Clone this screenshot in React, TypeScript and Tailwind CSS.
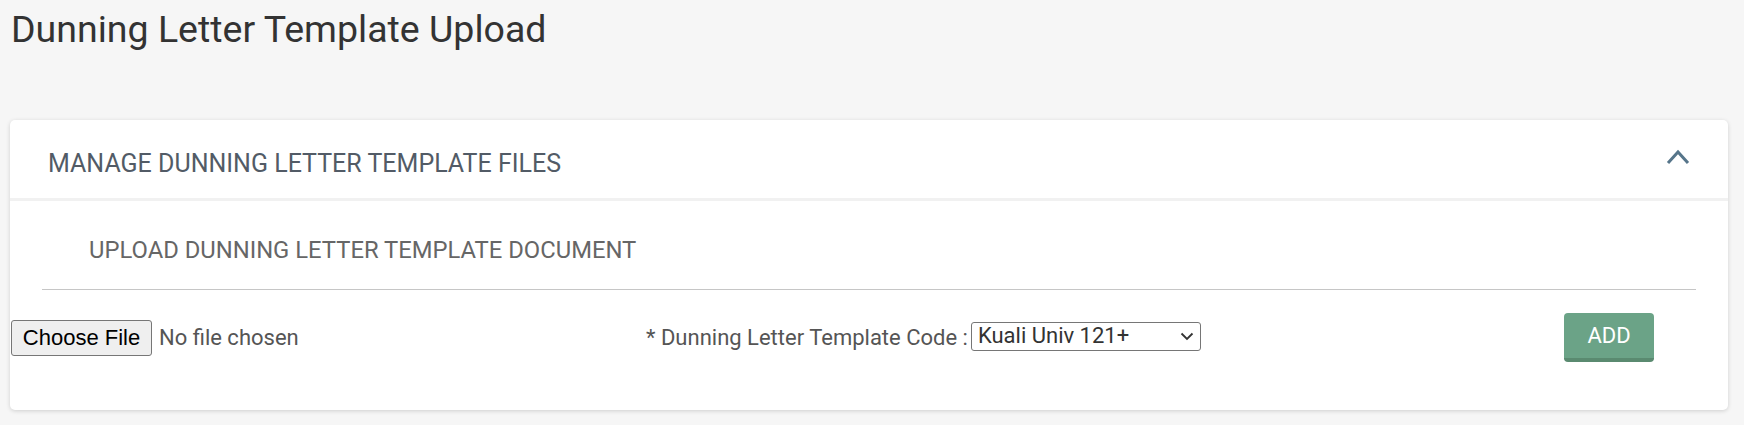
import { useState } from 'react';

const ChevronUp = () => (
  <svg width="24" height="16" viewBox="0 0 24 16" fill="none">
    <path d="M2 14 L12 3 L22 14" stroke="#56758a" strokeWidth="3" />
  </svg>
);

const SelectChevron = () => (
  <svg width="14" height="9" viewBox="0 0 14 9" fill="none">
    <path d="M1.5 1.5 L7 7 L12.5 1.5" stroke="#333" strokeWidth="1.8" />
  </svg>
);

const App = () => {
  const [open, setOpen] = useState(true);
  const [code] = useState('Kuali Univ 121+');

  return (
    <div className="min-h-screen bg-[#f6f6f6] font-['Roboto',sans-serif] pt-[7px]">
      <h1 className="ml-[11px] text-[37.5px] leading-[44px] text-[#333]">
        Dunning Letter Template Upload
      </h1>

      <div className="mt-[69px] ml-[10px] w-[1718px] bg-white rounded-[5px] shadow-[0_1px_4px_rgba(0,0,0,0.16)]">
        <div className="flex items-start justify-between pl-[38px] pr-[38px] pt-[30px] pb-[20px] border-b-[3px] border-[#f1f1f1]">
          <h2 className="text-[25px] leading-[28px] text-[#525b66]">
            MANAGE DUNNING LETTER TEMPLATE FILES
          </h2>
          <button onClick={() => setOpen(!open)} className="mt-[-1px]">
            <ChevronUp />
          </button>
        </div>

        {open && (
          <div className="pb-[48px]">
            <div className="mx-[32px] border-b border-[#c6c6c6]">
              <h3 className="pl-[47px] pt-[35px] pb-[25px] text-[23.8px] leading-[28px] text-[#666]">
                UPLOAD DUNNING LETTER TEMPLATE DOCUMENT
              </h3>
            </div>

            <div className="flex items-center pt-[23px] pl-px pr-[74px]">
              <div className="flex items-center w-[635px]">
                <button className="h-[36px] w-[141px] bg-[#efefef] border border-[#767676] rounded-[3px] font-['Liberation_Sans',Arial,sans-serif] text-[22px] leading-none text-black">
                  Choose File
                </button>
                <span className="ml-[7px] text-[22px] text-[#555]">No file chosen</span>
              </div>

              <div className="flex items-center">
                <span className="text-[22px] text-[#555]">* Dunning Letter Template Code :</span>
                <div className="ml-[3px] mb-[3px] flex items-center justify-between h-[29px] w-[230px] border border-[#767676] rounded-[3px] pl-[6px] pr-[6px]">
                  <span className="text-[22px] text-[#333] leading-none">{code}</span>
                  <SelectChevron />
                </div>
              </div>

              <button className="ml-auto h-[49px] w-[90px] bg-[#6ba387] border-b-[4px] border-[#5a8a70] rounded-[4px] text-[22px] text-white">
                ADD
              </button>
            </div>
          </div>
        )}
      </div>
    </div>
  );
};

export default App;
